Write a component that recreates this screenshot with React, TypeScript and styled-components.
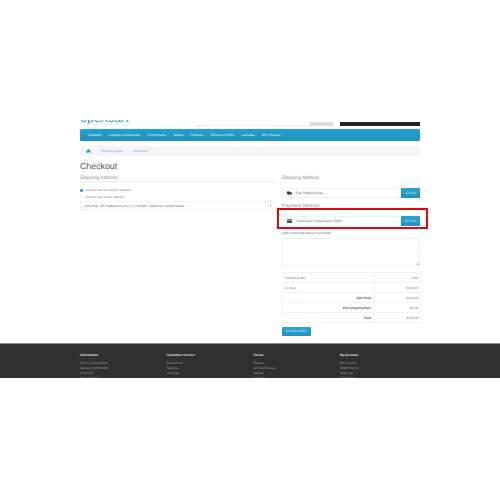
import React from "react";
import styled, { createGlobalStyle } from "styled-components";

const GlobalStyle = createGlobalStyle`
  html, body { margin: 0; padding: 0; background: #fff; }
  body {
    font-family: "Liberation Sans", Arial, sans-serif;
    color: #666;
    text-rendering: geometricPrecision;
  }
`;

const Page = styled.div`
  width: 500px;
  height: 500px;
  overflow: hidden;
  padding-top: 112px;
  box-sizing: border-box;
`;

const Container = styled.div`
  width: 340px;
  margin: 0 auto;
`;

// header is cropped at the top in the picture
const Header = styled.header`
  height: 13.5px;
  display: flex;
  align-items: flex-end;
`;

const Logo = styled.div`
  width: 115px;
  height: 4px;
  margin-bottom: 1.5px;
  overflow: hidden;
  display: flex;
  align-items: flex-end;
  font-size: 12.5px;
  line-height: 12px;
  color: #23a1d1;
`;

const Search = styled.div`
  width: 115px;
  height: 3.5px;
  background: linear-gradient(transparent 80%, #f0f0f0 80%);
`;

const SearchButton = styled.div`
  width: 23px;
  height: 3.5px;
  background: #ddd;
`;

const CartButton = styled.div`
  width: 80px;
  height: 3.5px;
  margin-left: 7px;
  background: #222;
`;

const Menu = styled.nav`
  margin-top: 3.8px;
  height: 11.5px;
  background: linear-gradient(#23a1d1, #1f90bb);
  border-radius: 1.5px;
  display: flex;
  align-items: center;
  padding-left: 8px;
  gap: 7.3px;
`;

const MenuItem = styled.span`
  font-size: 3.25px;
  color: #e6f5fb;
  white-space: nowrap;
`;

const Breadcrumb = styled.div`
  margin-top: 5px;
  height: 10px;
  background: #f5f5f5;
  border-radius: 1.5px;
  display: flex;
  align-items: center;
  padding-left: 5.5px;
  font-size: 3.4px;
  color: #4fb3da;
`;

const Crumb = styled.span<{ $gap: number }>`
  margin-left: ${(p) => p.$gap}px;
`;

const Title = styled.h1`
  margin: 3.8px 0 0;
  font-size: 8.8px;
  line-height: 13px;
  font-weight: 400;
  color: #555;
`;

const Columns = styled.div`
  margin-top: 2px;
  display: grid;
  grid-template-columns: 195px 138px;
  justify-content: space-between;
`;

const Column = styled.div`
  min-width: 0;
`;

const Legend = styled.div<{ $gap?: number; $line?: boolean }>`
  font-size: 4.9px;
  line-height: 7px;
  color: #888;
  margin-top: ${(p) => p.$gap ?? 0}px;
  padding-bottom: 0.5px;
  background: ${(p) => (p.$line ? "linear-gradient(transparent 92%, #ececec 92%)" : "none")};
`;

const RadioList = styled.div`
  margin-top: 4.8px;
  margin-bottom: 1px;
`;

const RadioRow = styled.label`
  display: flex;
  align-items: center;
  gap: 1.5px;
  height: 6.7px;
  font-size: 3.2px;
  color: #888;
`;

const RadioDot = styled.span<{ $on?: boolean }>`
  width: 2.8px;
  height: 2.8px;
  border-radius: 50%;
  background: ${(p) => (p.$on ? "#3a86bd" : "#f2f2f2")};
`;

const Select = styled.div`
  height: 9px;
  border: 1px solid #f2f2f2;
  border-radius: 1px;
  box-sizing: border-box;
  display: flex;
  align-items: center;
  justify-content: space-between;
  padding: 0 3px 0 3px;
  font-size: 3.3px;
  color: #666;
`;

const Chevron = styled.span`
  width: 1.8px;
  height: 1.8px;
  margin-top: -1px;
  background: linear-gradient(45deg, #666 25%, transparent 25%), linear-gradient(-45deg, #666 25%, transparent 25%);
`;

const InputGroup = styled.div<{ $marked?: boolean }>`
  margin-top: 6px;
  height: 10px;
  display: flex;
  position: relative;

  /* red marker drawn over the screenshot */
  ${(p) =>
    p.$marked &&
    `&::after {
      content: "";
      position: absolute;
      left: -5px;
      right: -8px;
      top: -8px;
      bottom: -3px;
      border: 2px solid #e30613;
    }`}
`;

const GroupIcon = styled.span`
  width: 14px;
  border: 1px solid #f2f2f2;
  border-right: none;
  box-sizing: border-box;
  display: flex;
  align-items: center;
  justify-content: center;
`;

const GroupText = styled.span`
  flex: 1;
  border: 1px solid #f2f2f2;
  border-left: none;
  box-sizing: border-box;
  display: flex;
  align-items: center;
  font-size: 3.3px;
  color: #666;
`;

const ChooseButton = styled.span`
  width: 19px;
  background: linear-gradient(#2aa3d2, #2192bd);
  color: #bfe5f3;
  font-size: 3.3px;
  display: flex;
  align-items: center;
  justify-content: center;
`;

const CommentLabel = styled.div`
  margin-top: 4.5px;
  font-size: 3.3px;
  line-height: 5px;
  color: #666;
`;

const Comment = styled.div`
  margin-top: 2.5px;
  height: 28px;
  border: 1px solid #f2f2f2;
  border-radius: 1px;
  box-sizing: border-box;
  position: relative;

  &::after {
    content: "";
    position: absolute;
    right: 0.5px;
    bottom: 0.5px;
    width: 2px;
    height: 2px;
    background: linear-gradient(135deg, transparent 50%, #aaa 50%);
  }
`;

const Table = styled.table`
  margin-top: 6px;
  width: 100%;
  border-collapse: collapse;
  table-layout: fixed;
  font-size: 3.2px;
`;

const Cell = styled.td<{ $right?: boolean; $bold?: boolean }>`
  border: 1px solid #f2f2f2;
  height: 9px;
  padding: 0 2px;
  line-height: 4px;
  text-align: ${(p) => (p.$right ? "right" : "left")};
  font-weight: ${(p) => (p.$bold ? 700 : 400)};
  color: ${(p) => (p.$bold ? "#555" : "#777")};
  white-space: nowrap;
`;

const ProductLink = styled.a`
  color: #23a1d1;
`;

const ConfirmButton = styled.div`
  margin-top: 3.5px;
  display: flex;
  align-items: center;
  justify-content: center;
  width: 28.5px;
  height: 9.5px;
  border-radius: 1px;
  background: linear-gradient(#2aa3d2, #2192bd);
  color: #d5eff8;
  font-size: 3.4px;
`;

const Footer = styled.footer`
  margin-top: 6.5px;
  height: 35px;
  overflow: hidden;
  background: #303030;
  border-top: 1px solid #8a8a8a;
  box-sizing: border-box;
`;

const FooterGrid = styled.div`
  width: 340px;
  margin: 0 auto;
  padding-top: 9.500px;
  display: grid;
  grid-template-columns: 86.7px 86.7px 86.3px 80px;
`;

const FooterTitle = styled.div`
  font-size: 3.3px;
  font-weight: 700;
  line-height: 5.5px;
  margin-bottom: 2.3px;
  color: #e0e0e0;
`;

const FooterLink = styled.div`
  font-size: 3.2px;
  line-height: 5px;
  color: #999;
  white-space: nowrap;
`;

const footerColumns = [
  { title: "Information", links: ["Terms & Conditions", "Delivery Information", "About Us", "Privacy Policy"] },
  { title: "Customer Service", links: ["Contact Us", "Returns", "Site Map"] },
  { title: "Extras", links: ["Brands", "Gift Certificates", "Affiliate", "Specials"] },
  { title: "My Account", links: ["My Account", "Order History", "Wish List", "Newsletter"] },
];

const menuItems = ["Desktops", "Laptops & Notebooks", "Components", "Tablets", "Software", "Phones & PDAs", "Cameras", "MP3 Players"];

const TruckIcon = () => (
  <svg width="5" height="4" viewBox="0 0 10 8">
    <path d="M0 1h6v5H0z M6 2.5h2.5L10 4.500V6H6z" fill="#333" />
    <circle cx="2.500" cy="6.500" r="1.400" fill="#333" />
    <circle cx="7.500" cy="6.500" r="1.400" fill="#333" />
  </svg>
);

const CardIcon = () => (
  <svg width="5" height="4" viewBox="0 0 10 8">
    <rect x="0" y="0.500" width="10" height="7" rx="1" fill="#333" />
    <rect x="0" y="2" width="10" height="1.500" fill="#ccc" />
  </svg>
);

const HomeIcon = () => (
  <svg width="5" height="4.500" viewBox="0 0 10 9">
    <path d="M5 0 0 4.500h1.500V9h2.500V6h2v3h2.500V4.500H10z" fill="#23a1d1" />
  </svg>
);

const App: React.FC = () => {
  return (
    <>
      <GlobalStyle />
      <Page>
        <Container>
          <Header>
            <Logo>opencart</Logo>
            <Search />
            <SearchButton />
            <CartButton />
          </Header>
          <Menu>
            {menuItems.map((item) => (
              <MenuItem key={item}>{item}</MenuItem>
            ))}
          </Menu>
          <Breadcrumb>
            <HomeIcon />
            <Crumb $gap={10}>Shopping Cart</Crumb>
            <Crumb $gap={11}>Checkout</Crumb>
          </Breadcrumb>
          <Title>Checkout</Title>
          <Columns>
            <Column>
              <Legend $line>Shipping Address</Legend>
              <RadioList>
                <RadioRow>
                  <RadioDot $on />I want to use an existing address
                </RadioRow>
                <RadioRow>
                  <RadioDot />I want to use a new address
                </RadioRow>
              </RadioList>
              <Select>
                <span>John Doe, 28 Stratford-on-Avon 1, Durham, California, United States</span>
                <Chevron />
              </Select>
            </Column>
            <Column>
              <Legend>Shipping Method</Legend>
              <InputGroup>
                <GroupIcon>
                  <TruckIcon />
                </GroupIcon>
                <GroupText>Flat Shipping Rate</GroupText>
                <ChooseButton>Choose</ChooseButton>
              </InputGroup>
              <Legend $gap={4.5}>Payment Method</Legend>
              <InputGroup $marked>
                <GroupIcon>
                  <CardIcon />
                </GroupIcon>
                <GroupText>Credit Card / Debit Card (Skrill)</GroupText>
                <ChooseButton>Choose</ChooseButton>
              </InputGroup>
              <CommentLabel>Add Comments About Your Order</CommentLabel>
              <Comment />
              <Table>
                <colgroup>
                  <col width="92" />
                  <col width="46" />
                </colgroup>
                <tbody>
                  <tr>
                    <Cell>Product Name</Cell>
                    <Cell $right>Total</Cell>
                  </tr>
                  <tr>
                    <Cell>
                      1x <ProductLink>iMac</ProductLink>
                    </Cell>
                    <Cell $right>$100.00</Cell>
                  </tr>
                  <tr>
                    <Cell $right $bold>Sub-Total:</Cell>
                    <Cell $right>$100.00</Cell>
                  </tr>
                  <tr>
                    <Cell $right $bold>Flat Shipping Rate:</Cell>
                    <Cell $right>$5.00</Cell>
                  </tr>
                  <tr>
                    <Cell $right $bold>Total:</Cell>
                    <Cell $right>$105.00</Cell>
                  </tr>
                </tbody>
              </Table>
              <ConfirmButton>Confirm Order</ConfirmButton>
            </Column>
          </Columns>
        </Container>
        <Footer>
          <FooterGrid>
            {footerColumns.map((col) => (
              <div key={col.title}>
                <FooterTitle>{col.title}</FooterTitle>
                {col.links.map((link) => (
                  <FooterLink key={link}>{link}</FooterLink>
                ))}
              </div>
            ))}
          </FooterGrid>
        </Footer>
      </Page>
    </>
  );
};

export default App;
